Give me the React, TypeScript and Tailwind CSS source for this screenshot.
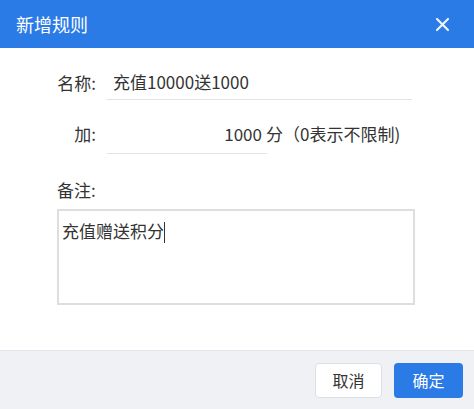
import React, { useState } from 'react';

// Dialog: add a new points rule
export default function App() {
  const [name, setName] = useState('充值10000送1000');
  const [points, setPoints] = useState('1000');

  return (
    <div
      className="w-[474px] h-[409px] flex flex-col bg-white text-[#333] overflow-hidden"
      style={{ fontFamily: '"Microsoft YaHei", "Noto Sans CJK SC", "Noto Sans", sans-serif' }}
    >
      {/* Header */}
      <div className="h-12 shrink-0 bg-[#2a7be6] flex items-center justify-between pl-4 pr-[20px]">
        <span className="text-white text-[18px]">新增规则</span>
        <button className="text-white/90 p-1">
          <svg width="15" height="15" viewBox="0 0 15 15" fill="none" stroke="currentColor" strokeWidth="2.2" strokeLinecap="round">
            <path d="M2 2 L13 13 M13 2 L2 13" />
          </svg>
        </button>
      </div>

      {/* Body */}
      <div className="flex-1 pt-[17px] pl-[50px] text-[17px]">
        <div className="flex items-stretch h-[35px]">
          <label className="w-[52px] pr-[6px] text-right self-center">名称:</label>
          <div className="ml-[5px] w-[305px] border-b border-[#e3e3e3] flex items-center">
            <input
              className="w-full outline-none bg-transparent px-[6px]"
              value={name}
              onChange={(e) => setName(e.target.value)}
            />
          </div>
        </div>

        <div className="flex items-stretch h-[40px] mt-[14px]">
          <label className="w-[52px] pr-[6px] text-right self-center">加:</label>
          <div className="ml-[5px] w-[160px] border-b border-[#e3e3e3] flex items-center">
            <input
              className="w-full outline-none bg-transparent text-right pr-[5px]"
              value={points}
              onChange={(e) => setPoints(e.target.value)}
            />
          </div>
          <span className="self-center -ml-[1px]">分（0表示不限制)</span>
        </div>

        <div className="mt-[24px] ml-[7px] leading-6">备注:</div>
        <div className="mt-[7px] ml-[7px] w-[358px] h-[96px] border-2 border-[#dedede] pl-[3px] pt-[8px] leading-6">
          充值赠送积分<span className="inline-block w-px h-[21px] bg-[#333] align-middle -mt-[2px]"></span>
        </div>
      </div>

      {/* Footer */}
      <div className="h-[59px] shrink-0 bg-[#f0f1f5] border-t border-[#e2e4ea] flex items-center justify-end gap-3 pr-[11px]">
        <button className="w-[67px] h-[35px] bg-white border border-[#dcdfe6] rounded text-[16px] text-[#333]">取消</button>
        <button className="w-[69px] h-[35px] bg-[#2a7be6] rounded text-[16px] text-white">确定</button>
      </div>
    </div>
  );
}
